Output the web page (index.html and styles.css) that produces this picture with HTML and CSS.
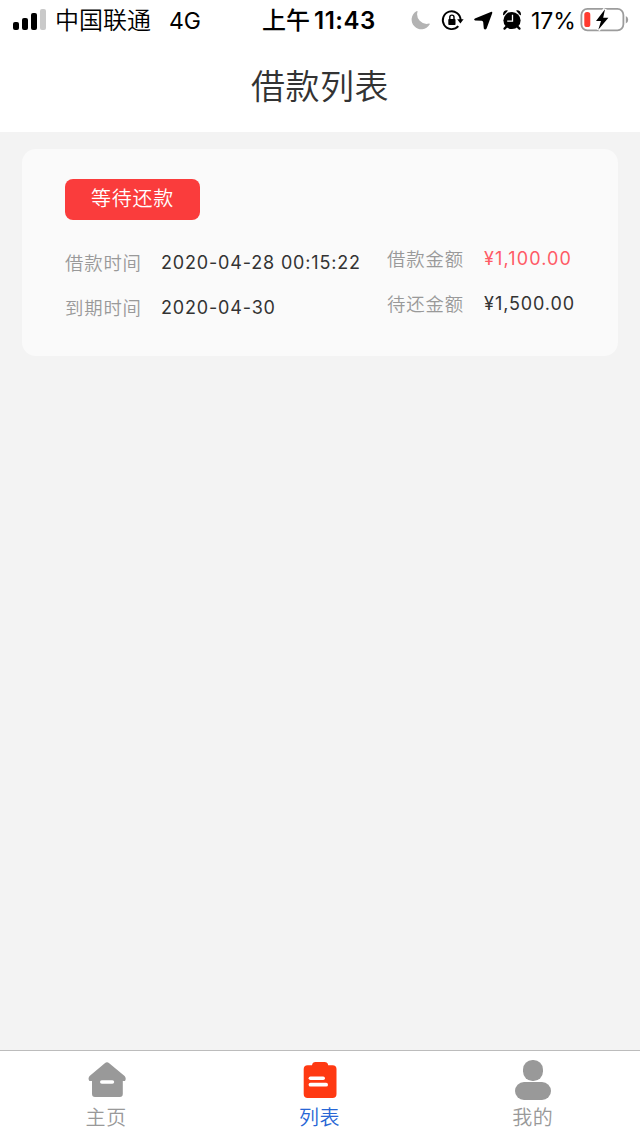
FILE: index.html
```html
<!DOCTYPE html>
<html lang="zh-CN">
<head>
<meta charset="utf-8">
<title>借款列表</title>
<link rel="stylesheet" href="styles.css">
</head>
<body>
<div class="screen">
  <header class="header">
    <div class="status">
      <div class="status-left">
        <svg class="signal" width="34" height="22" viewBox="0 0 34 22">
          <rect x="1" y="13" width="6" height="8" rx="2"/>
          <rect x="10" y="9" width="6" height="12" rx="2"/>
          <rect x="19" y="4" width="6" height="17" rx="2"/>
          <rect x="28" y="0" width="6" height="21" rx="2" fill="#c9c9c9"/>
        </svg>
        <span class="carrier">中国联通</span>
        <span class="network">4G</span>
      </div>
      <div class="time"><span class="ampm">上午</span><span class="clock">11:43</span></div>
      <div class="status-right">
        <svg width="115" height="26" viewBox="0 0 115 26">
          <path d="M7.6 4.4Q7.4 3.6 6.4 4.2A9.7 9.7 0 1 0 19.6 17.6Q20.3 16.4 19 16.6A9.6 9.6 0 0 1 7.6 4.4Z" fill="#b3b3b3"/>
          <path d="M50.6 13A8.9 8.9 0 1 0 48.3 19.2" fill="none" stroke="#000" stroke-width="1.9"/>
          <path d="M47.2 12.3h6.4L50.4 16.4Z"/>
          <rect x="38.3" y="12" width="7.2" height="6" rx=".8"/>
          <path d="M39.8 12.5V10.2a2.1 2.1 0 0 1 4.2 0V12.5" fill="none" stroke="#000" stroke-width="1.4"/>
          <path d="M80.8 4.9Q82.7 4.3 82.2 6.2L76.6 21.4Q75.2 23.6 73.8 21.6L73.2 15.2Q73 13.9 71.7 13.8L65 13.4Q63.1 12.4 64.9 11.4Z"/>
          <circle cx="102" cy="13.5" r="8.6"/>
          <path d="M93 7.2Q93.3 3.4 97 3.2Q98.2 3.2 97.6 3.9L94.1 7.9Q93.1 8.7 93 7.2ZM111 7.2Q110.7 3.4 107 3.2Q105.8 3.2 106.4 3.9L109.9 7.9Q110.9 8.7 111 7.2Z"/>
          <path d="M96.5 19.6l-2 2M107.5 19.6l2 2" fill="none" stroke="#000" stroke-width="2.2" stroke-linecap="round"/>
          <path d="M102.5 7.8V14.2H97.2" fill="none" stroke="#fff" stroke-width="1.3"/>
        </svg>
        <span class="percent">17%</span>
        <svg width="50" height="26" viewBox="0 0 50 26">
          <rect x="2.4" y="1.9" width="42" height="21.4" rx="6" fill="none" stroke="#9c9c9c" stroke-width="1.8"/>
          <path d="M46.8 9Q49.2 10 49.2 12.7T46.8 16.4Z" fill="#9c9c9c"/>
          <rect x="5.3" y="5.1" width="6" height="15" rx="2.7" fill="#ff3b30"/>
          <path d="M26 2.2L17 14H22L19.3 22.8L29.4 10.8H24.2Z" fill="#000" stroke="#fff" stroke-width="3.6" paint-order="stroke"/>
        </svg>
      </div>
    </div>
    <h1 class="title">借款列表</h1>
  </header>

  <main class="content">
    <section class="card">
      <div class="badge">等待还款</div>
      <div class="details">
        <dl class="column dates">
          <div class="row"><dt>借款时间</dt><dd>2020-04-28 00:15:22</dd></div>
          <div class="row"><dt>到期时间</dt><dd>2020-04-30</dd></div>
        </dl>
        <dl class="column amounts">
          <div class="row"><dt>借款金额</dt><dd class="due">¥1,100.00</dd></div>
          <div class="row"><dt>待还金额</dt><dd>¥1,500.00</dd></div>
        </dl>
      </div>
    </section>
  </main>

  <nav class="tabs">
    <a class="tab">
      <svg width="40" height="42" viewBox="0 0 40 42">
        <path d="M17.8 3.2Q20 1.2 22.2 3.2L37.6 16Q39.6 18.3 38 21H35.8V33.7Q35.8 37 32.8 37H8Q5 37 5 33.7V21H2.4Q.6 18.3 2.6 16Z" fill="#999"/>
        <rect x="13" y="20.2" width="14.2" height="3.6" rx="1.8" fill="#fff"/>
      </svg>
      <span>主页</span>
    </a>
    <a class="tab active">
      <svg width="40" height="42" viewBox="0 0 40 42">
        <path d="M12 5.2Q12.5 2 15.5 2H24.5Q27.7 2 28.2 5.2H32.5Q36.5 5.2 36.5 9V34Q36.5 38 32.5 38H7.7Q3.7 38 3.7 34V9Q3.7 5.2 7.7 5.2Z" fill="#ff3912"/>
        <rect x="8.6" y="16.4" width="16.4" height="3.6" rx="1.8" fill="#fff"/>
        <rect x="8.6" y="22.8" width="19.4" height="3.8" rx="1.9" fill="#fff"/>
      </svg>
      <span>列表</span>
    </a>
    <a class="tab">
      <svg width="40" height="42" viewBox="0 0 40 42">
        <rect x="10" y="0" width="20" height="21" rx="9.5" fill="#999"/>
        <rect x="2" y="22" width="36" height="18" rx="9" fill="#999"/>
      </svg>
      <span>我的</span>
    </a>
  </nav>
</div>
</body>
</html>
```
FILE: styles.css
```css
* { box-sizing: border-box; margin: 0; padding: 0; }
body {
  background: #f3f3f3;
  font-family: Inter, "Noto Sans CJK SC", sans-serif;
  color: #333;
}
svg { display: block; flex: none; }
.screen { display: flex; flex-direction: column; width: 640px; height: 1136px; }
.header { height: 132px; background: #fff; }
.status {
  display: grid;
  grid-template-columns: 262px 148px 230px;
  height: 40px;
  font-size: 24px;
  line-height: 42px;
  color: #000;
  white-space: nowrap;
}
.status-left { display: flex; padding-left: 12px; }
.signal { margin-top: 9px; }
.carrier { width: 96px; margin-left: 9px; font-weight: 350; }
.network { margin-left: 18px; font-size: 23px; }
.time { display: flex; }
.ampm { font-weight: 500; }
.clock { margin-left: 4px; font-size: 24px; font-weight: 600; letter-spacing: .5px; }
.status-right { display: flex; padding-top: 7px; }
.percent { width: 45px; margin: -7px 0 0 6px; font-size: 23px; letter-spacing: -.1px; }
.status-right svg:last-child { margin-left: 3px; }
.title {
  font-size: 34px;
  font-weight: 350;
  line-height: 94px;
  letter-spacing: .5px;
  text-align: center;
}
.content { flex: 1; padding: 17px 22px; }
.card {
  width: 596px;
  height: 207px;
  padding: 30px 43px;
  border-radius: 14px;
  background: #fafafa;
}
.badge {
  width: 135px;
  height: 41px;
  border-radius: 8px;
  background: #fa3c3c;
  color: #fff;
  font-size: 20px;
  font-weight: 350;
  line-height: 40px;
  letter-spacing: .8px;
  text-align: center;
}
.details { display: flex; font-size: 18px; line-height: 45px; white-space: nowrap; }
.dates { width: 323px; padding-top: 20px; }
.amounts { padding-top: 16px; }
.row { display: flex; height: 45px; }
dt { width: 96px; color: #999; font-size: 18.4px; font-weight: 350; line-height: 46px; letter-spacing: .8px; }
dd { letter-spacing: .83px; }
.amounts dd { margin-left: 1px; letter-spacing: .9px; }
.amounts .due { color: #ff5b66; letter-spacing: 1.1px; }
.tabs {
  display: grid;
  grid-template-columns: repeat(3, 1fr);
  height: 86px;
  border-top: 1px solid #bcbcbc;
  background: #fff;
}
.tab {
  display: flex;
  flex-direction: column;
  align-items: center;
  padding-top: 9px;
  color: #999;
  font-size: 20px;
  font-weight: 350;
  line-height: 32px;
  letter-spacing: .6px;
}
.tab span { margin-right: 1px; }
.active { color: #2766d5; }
```
